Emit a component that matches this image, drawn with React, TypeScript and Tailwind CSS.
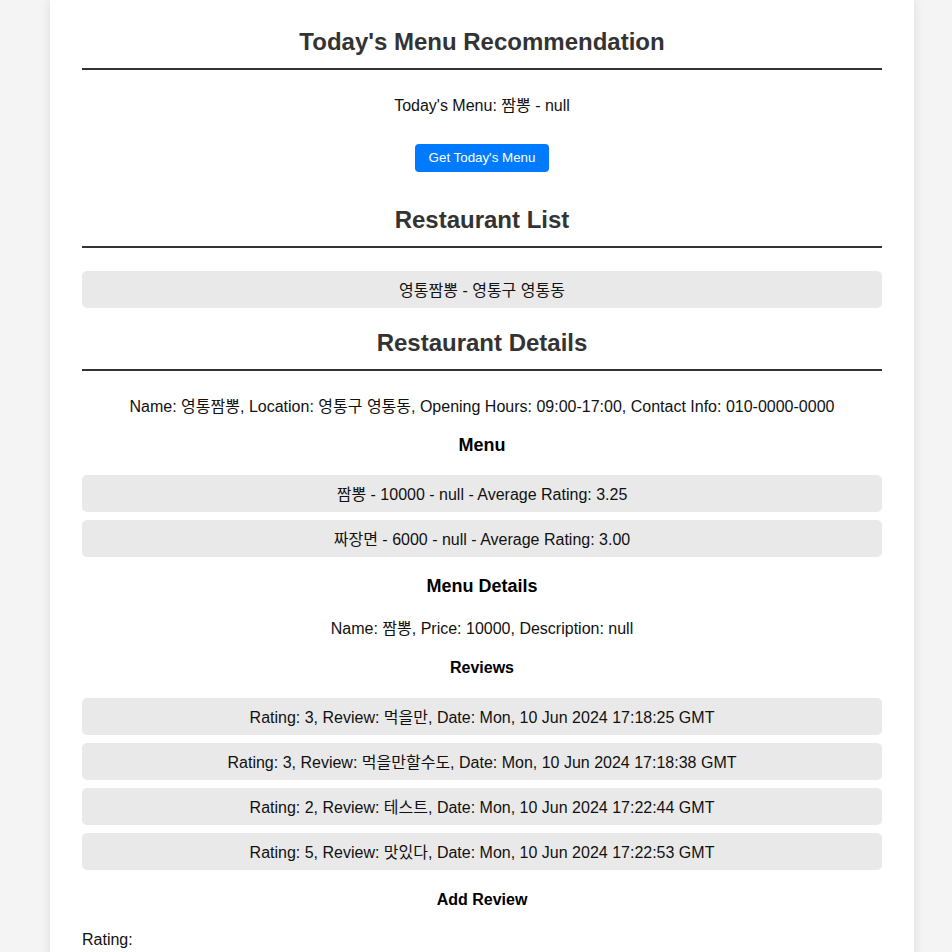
import React from "react"

const reviews = [
  "Rating: 3, Review: 먹을만, Date: Mon, 10 Jun 2024 17:18:25 GMT",
  "Rating: 3, Review: 먹을만할수도, Date: Mon, 10 Jun 2024 17:18:38 GMT",
  "Rating: 2, Review: 테스트, Date: Mon, 10 Jun 2024 17:22:44 GMT",
  "Rating: 5, Review: 맛있다, Date: Mon, 10 Jun 2024 17:22:53 GMT",
]

const menus = ["짬뽕 - 10000 - null - Average Rating: 3.25", "짜장면 - 6000 - null - Average Rating: 3.00"]

function Item({ children }: { children: React.ReactNode }) {
  return (
    <li className="bg-[#e9e9e9] rounded-[5px] pt-[11px] pb-[9px] leading-[17px] text-center mb-2 last:mb-0">
      {children}
    </li>
  )
}

function SectionTitle({ children, className = "" }: { children: React.ReactNode; className?: string }) {
  return (
    <h2
      className={`text-[24px] leading-[28px] font-bold text-[#333] text-center pb-[12px] border-b-2 border-[#333] ${className}`}
    >
      {children}
    </h2>
  )
}

export default function App() {
  return (
    <div
      className="min-h-screen bg-[#f4f4f4] text-[16px] text-[#111]"
      style={{ fontFamily: '"Liberation Sans", Arial, "Noto Sans CJK KR", sans-serif' }}
    >
      <div className="ml-[50px] w-[864px] min-h-[952px] bg-white px-[32px] pt-[28px] pb-10 shadow-[0_0_10px_rgba(0,0,0,0.1)]">
        <SectionTitle>Today's Menu Recommendation</SectionTitle>
        <p className="mt-[27px] leading-[18px] text-center">Today's Menu: 짬뽕 - null</p>
        <div className="mt-[29px] flex justify-center">
          <button className="h-[28px] px-[14px] bg-[#007bff] text-white text-[13.33px] rounded-[4px]">
            Get Today's Menu
          </button>
        </div>

        <SectionTitle className="mt-[34px]">Restaurant List</SectionTitle>
        <ul className="mt-[23px]">
          <Item>영통짬뽕 - 영통구 영통동</Item>
        </ul>

        <SectionTitle className="mt-[21px]">Restaurant Details</SectionTitle>
        <p className="mt-[27px] leading-[18px] text-center">
          Name: 영통짬뽕, Location: 영통구 영통동, Opening Hours: 09:00-17:00, Contact Info: 010-0000-0000
        </p>
        <h3 className="mt-[18px] text-[18px] leading-[22px] font-bold text-center text-black">Menu</h3>
        <ul className="mt-[19px]">
          {menus.map((m) => (
            <Item key={m}>{m}</Item>
          ))}
        </ul>

        <h3 className="mt-[18px] text-[18px] leading-[22px] font-bold text-center text-black">Menu Details</h3>
        <p className="mt-[23px] leading-[18px] text-center">Name: 짬뽕, Price: 10000, Description: null</p>
        <h4 className="mt-[21px] leading-[18px] font-bold text-center text-black">Reviews</h4>
        <ul className="mt-[21px]">
          {reviews.map((r) => (
            <Item key={r}>{r}</Item>
          ))}
        </ul>

        <h4 className="mt-[21px] leading-[18px] font-bold text-center text-black">Add Review</h4>
        <form className="mt-[22px]">
          <label className="block leading-[18px]">Rating:</label>
          <input type="number" className="mt-1 w-full border border-[#ccc] rounded-[4px] px-2 py-1" />
        </form>
      </div>
    </div>
  )
}
